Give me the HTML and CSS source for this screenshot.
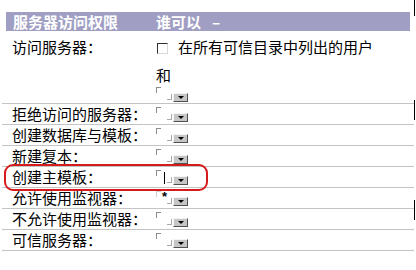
FILE: index.html
```html
<!DOCTYPE html>
<html lang="zh-CN">
<head>
<meta charset="utf-8">
<link rel="stylesheet" href="styles.css">
</head>
<body>
<div class="page">
  <div class="head"><span class="hcol1">服务器访问权限</span><span class="hcol2">谁可以<span class="dash">–</span></span></div>

  <div class="row first">
    <div class="label">访问服务器：</div>
    <div class="val">
      <div class="chkline"><span class="chk"></span><span class="chktext">在所有可信目录中列出的用户</span></div>
      <div class="and">和</div>
      <span class="combo"><span class="field"></span><span class="btn"><span class="tri"></span></span></span>
    </div>
  </div>

  <div class="row">
    <div class="label">拒绝访问的服务器：</div>
    <div class="val"><span class="combo"><span class="field"></span><span class="btn"><span class="tri"></span></span></span></div>
  </div>

  <div class="row">
    <div class="label">创建数据库与模板：</div>
    <div class="val"><span class="combo"><span class="field"></span><span class="btn"><span class="tri"></span></span></span></div>
  </div>

  <div class="row">
    <div class="label">新建复本：</div>
    <div class="val"><span class="combo"><span class="field"></span><span class="btn"><span class="tri"></span></span></span></div>
  </div>

  <div class="row marked">
    <div class="label">创建主模板：</div>
    <div class="val"><span class="combo"><span class="field"><span class="caret"></span></span><span class="btn"><span class="tri"></span></span></span></div>
    <div class="ring"></div>
  </div>

  <div class="row">
    <div class="label">允许使用监视器：</div>
    <div class="val"><span class="combo"><span class="field faint"><span class="star">*</span></span><span class="btn"><span class="tri"></span></span></span></div>
  </div>

  <div class="row">
    <div class="label">不允许使用监视器：</div>
    <div class="val"><span class="combo"><span class="field"></span><span class="btn"><span class="tri"></span></span></span></div>
  </div>

  <div class="row">
    <div class="label">可信服务器：</div>
    <div class="val"><span class="combo"><span class="field"></span><span class="btn"><span class="tri"></span></span></span></div>
  </div>

  <div class="edge e1"></div>
  <div class="edge e2"></div>
  <div class="edge e3"></div>
</div>
</body>
</html>
```

FILE: styles.css
```css
html, body {
  margin: 0;
  padding: 0;
  background: #ffffff;
}

.page {
  position: relative;
  width: 416px;
  height: 270px;
  padding-top: 12px;
  box-sizing: border-box;
  font-family: "Noto Sans CJK SC", "Noto Sans", sans-serif;
  font-size: 15px;
  color: #000000;
  overflow: hidden;
}

.head {
  display: flex;
  margin-left: 6px;
  width: 404px;
  height: 19px;
  background: #a09fc3;
  color: #ffffff;
  font-weight: bold;
  line-height: 19px;
}

.hcol1 {
  box-sizing: border-box;
  width: 150px;
  padding-left: 7px;
}

.dash {
  margin-left: 11px;
}

.row {
  position: relative;
  display: grid;
  grid-template-columns: 153px 1fr;
  margin-left: 2px;
  width: 412px;
  height: 20px;
  border-bottom: 1px solid #c4c4c4;
}

.row.first {
  height: 72px;
}

.label {
  padding-left: 10px;
  line-height: 20px;
  white-space: nowrap;
}

.first .label {
  padding-top: 6px;
}

.val {
  padding-top: 3px;
  padding-left: 1px;
}

.first .val {
  padding-top: 6px;
}

.chkline {
  display: flex;
  align-items: center;
  height: 20px;
  line-height: 20px;
  margin-bottom: 8px;
  white-space: nowrap;
}

.chk {
  box-sizing: border-box;
  width: 11px;
  height: 11px;
  margin-left: 1px;
  margin-top: 2px;
  border-top: 1px solid #303030;
  border-left: 1px solid #303030;
  border-right: 1px solid #d8d8d8;
  border-bottom: 1px solid #d8d8d8;
}

.chktext {
  margin-left: 10px;
}

.and {
  line-height: 20px;
  height: 20px;
  margin-bottom: 2px;
}

.combo {
  display: inline-flex;
  align-items: flex-start;
  vertical-align: top;
}

.field {
  position: relative;
  display: block;
  width: 16px;
  height: 13px;
}

.field::before {
  content: "";
  position: absolute;
  left: 0;
  top: 0;
  width: 4px;
  height: 5px;
  border-top: 1px solid #8c8c8c;
  border-left: 1px solid #8c8c8c;
}

.field::after {
  content: "";
  position: absolute;
  right: 0;
  bottom: 0;
  width: 4px;
  height: 5px;
  border-bottom: 1px solid #a8a8a8;
  border-right: 1px solid #a8a8a8;
}

.field.faint::before {
  border-color: #cfcfcf;
}

.caret {
  position: absolute;
  left: 8px;
  top: 2px;
  width: 1px;
  height: 12px;
  background: #000000;
}

.star {
  position: absolute;
  left: 6px;
  top: -1px;
  font-family: "Liberation Sans", sans-serif;
  font-size: 13px;
  font-weight: bold;
  line-height: 14px;
}

.btn {
  box-sizing: border-box;
  display: flex;
  align-items: center;
  justify-content: center;
  width: 15px;
  height: 9px;
  margin-top: 6px;
  margin-left: 1px;
  background: #c6c6c6;
  border-top: 1px solid #f4f4f4;
  border-left: 1px solid #f4f4f4;
  border-right: 1px solid #505050;
  border-bottom: 1px solid #505050;
}

.tri {
  width: 0;
  height: 0;
  border-left: 3px solid transparent;
  border-right: 3px solid transparent;
  border-top: 3px solid #000000;
}

.ring {
  position: absolute;
  left: 2px;
  top: -3px;
  width: 204px;
  height: 27px;
  box-sizing: border-box;
  border: 2px solid #d41a1a;
  border-radius: 9px;
  pointer-events: none;
}

.edge {
  position: absolute;
  left: 414px;
  width: 1px;
  background: #000000;
}

.e1 { top: 0; height: 16px; }
.e2 { top: 100px; height: 20px; }
.e3 { top: 200px; height: 20px; }
```
